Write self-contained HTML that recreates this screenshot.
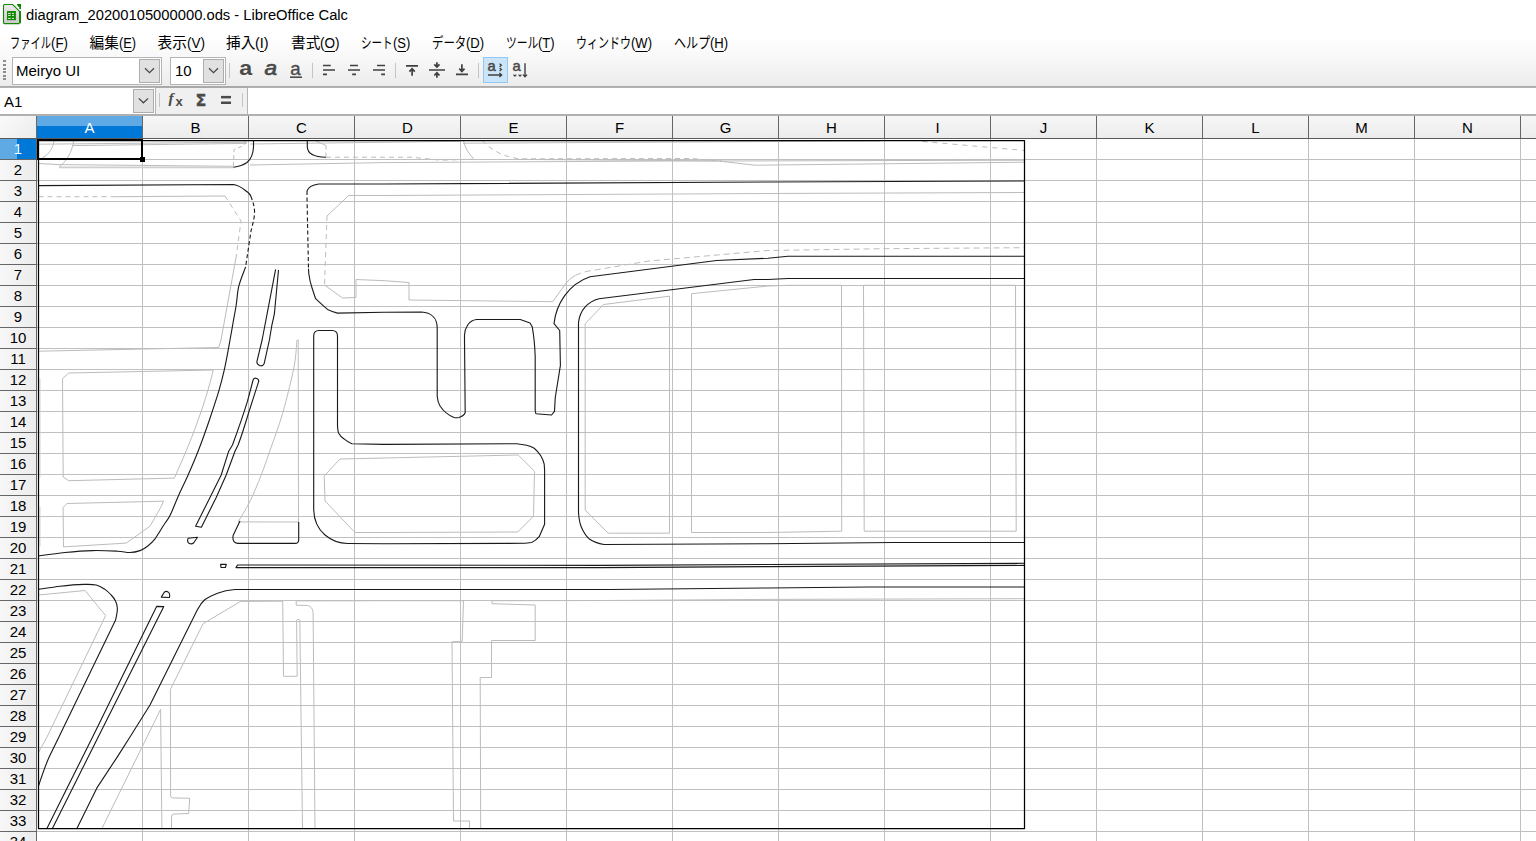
<!DOCTYPE html>
<html lang="ja"><head><meta charset="utf-8"><title>diagram_20200105000000.ods - LibreOffice Calc</title>
<style>
html,body{margin:0;padding:0;}
body{width:1536px;height:841px;overflow:hidden;background:#fff;position:relative;font-family:"Liberation Sans","Noto Sans CJK JP",sans-serif;color:#000;}
#title{position:absolute;left:0;top:0;width:1536px;height:29px;background:#fff;}
#title .txt{position:absolute;left:26px;top:6px;font-size:14.75px;line-height:18px;white-space:nowrap;}
#menu{position:absolute;left:0;top:29px;width:1536px;height:27px;}
#menu span{position:absolute;top:5px;font-size:14.7px;line-height:18px;white-space:nowrap;transform-origin:0 50%;}
#menu b.k{display:inline-block;font-weight:normal;transform-origin:0 50%;white-space:nowrap;vertical-align:top;}
#menu u{text-decoration:underline;text-underline-offset:2.5px;}
#tbbg{position:absolute;left:0;top:29px;width:1536px;height:57px;background:linear-gradient(#fff 0,#fff 12%,#f8f8f8 50%,#ececec 100%);}
#tb{position:absolute;left:0;top:56px;width:1536px;height:30px;}
#tbline{position:absolute;left:0;top:86px;width:1536px;height:2px;background:#a9a9a9;}
.combo{position:absolute;background:#fff;border:1px solid #b4b4b4;box-sizing:border-box;}
.combo .t{position:absolute;left:3px;top:4px;font-size:15px;line-height:18px;white-space:nowrap;}
.combo .btn{position:absolute;right:1px;top:1px;bottom:1px;width:21px;background:#e1e1e1;border:1px solid #adadad;box-sizing:border-box;}
#fb{position:absolute;left:0;top:88px;width:1536px;height:28px;background:#fff;}
#fbtools{position:absolute;left:156px;top:0;width:92px;height:27px;background:#f0f0f0;}
#fbline{position:absolute;left:0;top:114px;width:1536px;height:2px;background:#b0b0b0;}
#colhdr{position:absolute;left:0;top:116px;width:1536px;height:23px;background:linear-gradient(#f7f7f7,#ececec);border-bottom:1px solid #5a5a5a;box-sizing:border-box;}
#colhdr .corner{position:absolute;left:0;top:0;width:36px;height:22px;background:linear-gradient(135deg,#fafafa,#ececec);border-right:1px solid #666;}
.ch{position:absolute;top:0;height:22px;box-sizing:border-box;border-right:1px solid #666;text-align:center;font-size:15px;line-height:23px;color:#000;}
.ch.sel{background:linear-gradient(#5fa9e5 0,#5fa9e5 10px,#0078d7 10px,#0078d7 100%);color:#fff;}
#rowhdr{position:absolute;left:0;top:116px;width:37px;height:725px;}
.rh{position:absolute;left:0;width:37px;height:21px;box-sizing:border-box;background:linear-gradient(90deg,#f7f7f7,#ececec);border-bottom:1px solid #666;border-right:1px solid #666;text-align:center;font-size:15px;line-height:20px;}
.rh.sel{background:linear-gradient(90deg,#5fa9e5 0,#5fa9e5 17px,#0078d7 17px,#0078d7 100%);color:#fff;}
#sheet{position:absolute;left:0;top:0;}
svg text{font-family:"Liberation Sans",sans-serif;}
svg text.dj{font-family:"DejaVu Sans",sans-serif;}
svg text.ls{font-family:"Liberation Serif",serif;}

#wrapbtn{position:absolute;left:483px;top:1px;width:25px;height:26px;box-sizing:border-box;background:#cce4f7;border:1px solid #90c8f6;}
#fbinput{position:absolute;left:247px;top:-1px;width:1290px;height:28px;box-sizing:border-box;background:#fff;border:1px solid #b4b4b4;}

</style></head>
<body>
<div id="title">
<svg style="position:absolute;left:0;top:0" width="26" height="28" viewBox="0 0 26 28"><defs><linearGradient id="dg" x1="0" y1="0" x2="0" y2="1"><stop offset="0" stop-color="#efe9ef"/><stop offset="1" stop-color="#cfc8cf"/></linearGradient></defs><path d="M4 5H13L19.5 11.5V23.5H4Z" fill="url(#dg)"/><path d="M3.5 5L4.5 4.5H12.7L19.6 11.4M3.5 5V23L4.5 23.6H19.5" fill="none" stroke="#118a02" stroke-width="1.1"/><rect x="19" y="11" width="2" height="12.3" fill="#118a02"/><path d="M17 4H21V9H19.3V6.8H18V5.6H17Z" fill="#0e8200"/><rect x="7" y="11" width="8.9" height="9.2" fill="#118a02"/><path d="M8 13.4h2.8M12 13.4h2M8 15.4h2.8M12 15.4h2M8 18.4h2.8M12 18.4h2" stroke="#f4f4f4" stroke-width="0.9"/></svg>
<div class="txt">diagram_20200105000000.ods - LibreOffice Calc</div>
</div>
<div id="tbbg"></div>
<div id="menu">
<span style="left:10px"><b class="k" style="width:41.0px;transform:scaleX(0.697)">ファイル</b><b class="k" style="width:17.0px;transform:scaleX(0.904)">(<u>F</u>)</b></span>
<span style="left:89.5px"><b class="k" style="width:29.4px;transform:scaleX(1.000)">編集</b><b class="k" style="width:17.1px;transform:scaleX(0.871)">(<u>E</u>)</b></span>
<span style="left:157.5px"><b class="k" style="width:29.4px;transform:scaleX(1.000)">表示</b><b class="k" style="width:18.1px;transform:scaleX(0.922)">(<u>V</u>)</b></span>
<span style="left:226px"><b class="k" style="width:29.4px;transform:scaleX(1.000)">挿入</b><b class="k" style="width:13.6px;transform:scaleX(0.978)">(<u>I</u>)</b></span>
<span style="left:291px"><b class="k" style="width:29.4px;transform:scaleX(1.000)">書式</b><b class="k" style="width:19.6px;transform:scaleX(0.922)">(<u>O</u>)</b></span>
<span style="left:361px"><b class="k" style="width:31.6px;transform:scaleX(0.717)">シート</b><b class="k" style="width:17.4px;transform:scaleX(0.887)">(<u>S</u>)</b></span>
<span style="left:431.5px"><b class="k" style="width:34.3px;transform:scaleX(0.778)">データ</b><b class="k" style="width:18.2px;transform:scaleX(0.890)">(<u>D</u>)</b></span>
<span style="left:506px"><b class="k" style="width:32.3px;transform:scaleX(0.732)">ツール</b><b class="k" style="width:16.7px;transform:scaleX(0.888)">(<u>T</u>)</b></span>
<span style="left:576px"><b class="k" style="width:55.0px;transform:scaleX(0.748)">ウィンドウ</b><b class="k" style="width:21.0px;transform:scaleX(0.886)">(<u>W</u>)</b></span>
<span style="left:674px"><b class="k" style="width:36.3px;transform:scaleX(0.823)">ヘルプ</b><b class="k" style="width:18.2px;transform:scaleX(0.890)">(<u>H</u>)</b></span>
</div>
<div id="tb">
<div class="combo" style="left:12px;top:1px;width:150px;height:28px"><div class="t" style="left:3px">Meiryo UI</div><div class="btn"></div></div>
<div class="combo" style="left:170px;top:1px;width:56px;height:28px"><div class="t" style="left:4px">10</div><div class="btn"></div></div>
<div id="wrapbtn"></div>
</div>
<div id="tbline"></div>
<div id="fb">
<div class="combo" style="left:-1px;top:-1px;width:157px;height:28px"><div class="t" style="left:4px;top:5px">A1</div><div class="btn" style="right:1px;width:21px"></div></div>
<div id="fbtools"></div>
<div id="fbinput"></div>
</div>
<div id="fbline"></div>
<svg id="icons" width="1536" height="60" viewBox="0 56 1536 60" style="position:absolute;left:0;top:56px">
<g fill="#8c8c8c" shape-rendering="crispEdges"><rect x="3" y="60" width="3" height="2"/><rect x="3" y="64" width="3" height="2"/><rect x="3" y="68" width="3" height="2"/><rect x="3" y="71" width="3" height="2"/><rect x="3" y="75" width="3" height="2"/><rect x="3" y="78" width="3" height="2"/></g>
<g fill="none" stroke="#444" stroke-width="1.2"><path d="M145 68.3l4.5 4.4 4.5-4.4M209 68.3l4.5 4.4 4.5-4.4M138.8 98.4l4.6 4.4 4.7-4.4"/></g>
<g stroke="#c4c4c4" stroke-width="1" shape-rendering="crispEdges"><path d="M229.5 63v15M312.5 63v15M395.5 63v15M478.5 63v15M159.5 93v14M242.5 93v14"/></g>
<g fill="#4a4a4a">
<text x="239.3" y="75.2" font-size="19.4" font-weight="bold" transform="translate(239.3 0) scale(1.2 1) translate(-239.3 0)">a</text>
<text x="264.6" y="75.2" font-size="19.4" font-style="italic" stroke="#4a4a4a" stroke-width="0.7" transform="translate(265 0) scale(1.16 1) translate(-265 0)">a</text>
<text x="290.2" y="74.7" font-size="18.6" stroke="#4a4a4a" stroke-width="0.35">a</text>
<rect x="290" y="76.4" width="12" height="1.6"/>
<text x="487.6" y="70.9" font-size="14.8" stroke="#4a4a4a" stroke-width="0.5">a</text>
<text x="512.6" y="70.9" font-size="14.8" stroke="#4a4a4a" stroke-width="0.5">a</text>
</g>
<g fill="none" stroke="#404040" stroke-width="1.7">
<path d="M323 65.5h7.7M323 70h12M323 74.4h4"/>
<path d="M350 65.5h8M348 70h12M352.2 74.4h3.8"/>
<path d="M377 65.5h8M373 70h12M381.2 74.4h3.8"/>
<path d="M406 65.8h12M412.1 75.8v-7M409.4 71.6l2.7-2.9 2.7 2.9"/>
<path d="M429 70h16M436.9 62.2v4.6M434.3 64.3l2.6 2.8 2.6-2.8M436.9 77.8v-4.8M434.3 75.5l2.6-2.8 2.6 2.8"/>
<path d="M456 74.4h12M461.9 64.2v7M459.3 68.6l2.6 2.9 2.6-2.9"/>
<path d="M488 75h13.5M499.4 73l2.2 2-2.2 2" stroke-width="1.4"/>
<path d="M499.6 63.8l1.8 1.5-1.8 1.5M499.6 68l1.8 1.5-1.8 1.5" stroke-width="1.3"/>
<path d="M525 63.2v13M523 74.6l2 2.2 2-2.2" stroke-width="1.4"/>
<path d="M513.5 74.6l1.4 1.5 1.4-1.5M518.6 74.6l1.4 1.5 1.4-1.5" stroke-width="1.2"/>
</g>
<g fill="#4a4a4a">
<text x="168.6" y="103.4" font-size="15.5" font-style="italic" font-weight="bold" class="ls">f</text>
<text x="175.6" y="106.3" font-size="13" font-weight="bold">x</text>
<text x="195.6" y="105.9" font-size="16.2" font-weight="bold" class="dj" stroke="#4a4a4a" stroke-width="0.4" transform="translate(196 0) scale(0.98 1) translate(-196 0)">Σ</text>
<rect x="221" y="95.9" width="10" height="2.5"/><rect x="221" y="101.5" width="10" height="2.5"/>
</g>
</svg>
<div id="colhdr">
<div class="corner"></div>
<div class="ch sel" style="left:37px;width:106px">A</div>
<div class="ch" style="left:143px;width:106px">B</div>
<div class="ch" style="left:249px;width:106px">C</div>
<div class="ch" style="left:355px;width:106px">D</div>
<div class="ch" style="left:461px;width:106px">E</div>
<div class="ch" style="left:567px;width:106px">F</div>
<div class="ch" style="left:673px;width:106px">G</div>
<div class="ch" style="left:779px;width:106px">H</div>
<div class="ch" style="left:885px;width:106px">I</div>
<div class="ch" style="left:991px;width:106px">J</div>
<div class="ch" style="left:1097px;width:106px">K</div>
<div class="ch" style="left:1203px;width:106px">L</div>
<div class="ch" style="left:1309px;width:106px">M</div>
<div class="ch" style="left:1415px;width:106px">N</div>
<div class="ch" style="left:1521px;width:106px"></div>
</div>
<div id="rowhdr">
<div class="rh sel" style="top:23px">1</div>
<div class="rh" style="top:44px">2</div>
<div class="rh" style="top:65px">3</div>
<div class="rh" style="top:86px">4</div>
<div class="rh" style="top:107px">5</div>
<div class="rh" style="top:128px">6</div>
<div class="rh" style="top:149px">7</div>
<div class="rh" style="top:170px">8</div>
<div class="rh" style="top:191px">9</div>
<div class="rh" style="top:212px">10</div>
<div class="rh" style="top:233px">11</div>
<div class="rh" style="top:254px">12</div>
<div class="rh" style="top:275px">13</div>
<div class="rh" style="top:296px">14</div>
<div class="rh" style="top:317px">15</div>
<div class="rh" style="top:338px">16</div>
<div class="rh" style="top:359px">17</div>
<div class="rh" style="top:380px">18</div>
<div class="rh" style="top:401px">19</div>
<div class="rh" style="top:422px">20</div>
<div class="rh" style="top:443px">21</div>
<div class="rh" style="top:464px">22</div>
<div class="rh" style="top:485px">23</div>
<div class="rh" style="top:506px">24</div>
<div class="rh" style="top:527px">25</div>
<div class="rh" style="top:548px">26</div>
<div class="rh" style="top:569px">27</div>
<div class="rh" style="top:590px">28</div>
<div class="rh" style="top:611px">29</div>
<div class="rh" style="top:632px">30</div>
<div class="rh" style="top:653px">31</div>
<div class="rh" style="top:674px">32</div>
<div class="rh" style="top:695px">33</div>
<div class="rh" style="top:716px">34</div>
</div>
<svg id="sheet" width="1536" height="841" viewBox="0 0 1536 841">
<g stroke="#c0c0c0" stroke-width="1" shape-rendering="crispEdges">
<line x1="142.5" y1="139" x2="142.5" y2="841"/>
<line x1="248.5" y1="139" x2="248.5" y2="841"/>
<line x1="354.5" y1="139" x2="354.5" y2="841"/>
<line x1="460.5" y1="139" x2="460.5" y2="841"/>
<line x1="566.5" y1="139" x2="566.5" y2="841"/>
<line x1="672.5" y1="139" x2="672.5" y2="841"/>
<line x1="778.5" y1="139" x2="778.5" y2="841"/>
<line x1="884.5" y1="139" x2="884.5" y2="841"/>
<line x1="990.5" y1="139" x2="990.5" y2="841"/>
<line x1="1096.5" y1="139" x2="1096.5" y2="841"/>
<line x1="1202.5" y1="139" x2="1202.5" y2="841"/>
<line x1="1308.5" y1="139" x2="1308.5" y2="841"/>
<line x1="1414.5" y1="139" x2="1414.5" y2="841"/>
<line x1="1520.5" y1="139" x2="1520.5" y2="841"/>
<line x1="37" y1="159.5" x2="1536" y2="159.5"/>
<line x1="37" y1="180.5" x2="1536" y2="180.5"/>
<line x1="37" y1="201.5" x2="1536" y2="201.5"/>
<line x1="37" y1="222.5" x2="1536" y2="222.5"/>
<line x1="37" y1="243.5" x2="1536" y2="243.5"/>
<line x1="37" y1="264.5" x2="1536" y2="264.5"/>
<line x1="37" y1="285.5" x2="1536" y2="285.5"/>
<line x1="37" y1="306.5" x2="1536" y2="306.5"/>
<line x1="37" y1="327.5" x2="1536" y2="327.5"/>
<line x1="37" y1="348.5" x2="1536" y2="348.5"/>
<line x1="37" y1="369.5" x2="1536" y2="369.5"/>
<line x1="37" y1="390.5" x2="1536" y2="390.5"/>
<line x1="37" y1="411.5" x2="1536" y2="411.5"/>
<line x1="37" y1="432.5" x2="1536" y2="432.5"/>
<line x1="37" y1="453.5" x2="1536" y2="453.5"/>
<line x1="37" y1="474.5" x2="1536" y2="474.5"/>
<line x1="37" y1="495.5" x2="1536" y2="495.5"/>
<line x1="37" y1="516.5" x2="1536" y2="516.5"/>
<line x1="37" y1="537.5" x2="1536" y2="537.5"/>
<line x1="37" y1="558.5" x2="1536" y2="558.5"/>
<line x1="37" y1="579.5" x2="1536" y2="579.5"/>
<line x1="37" y1="600.5" x2="1536" y2="600.5"/>
<line x1="37" y1="621.5" x2="1536" y2="621.5"/>
<line x1="37" y1="642.5" x2="1536" y2="642.5"/>
<line x1="37" y1="663.5" x2="1536" y2="663.5"/>
<line x1="37" y1="684.5" x2="1536" y2="684.5"/>
<line x1="37" y1="705.5" x2="1536" y2="705.5"/>
<line x1="37" y1="726.5" x2="1536" y2="726.5"/>
<line x1="37" y1="747.5" x2="1536" y2="747.5"/>
<line x1="37" y1="768.5" x2="1536" y2="768.5"/>
<line x1="37" y1="789.5" x2="1536" y2="789.5"/>
<line x1="37" y1="810.5" x2="1536" y2="810.5"/>
<line x1="37" y1="831.5" x2="1536" y2="831.5"/>
</g>
<g id="gray" fill="none" stroke="#bcbcbc" stroke-width="1" stroke-linejoin="round">
<path d="M54 140.5C53 149 48 156 39 159.5M73.7 140.5C72 152 67 161 59 167"/>
<path d="M38.5 144.2L247 142.2M73 145.6L247 143.4M250 144L460 141.3M463 143.2L880 141"/>
<path d="M38.5 163.5L59 164.6L233 166.3"/>
<path d="M59 167.4L233.5 167.4" stroke="#cfcfcf" stroke-width="1.6"/>
<path d="M250 165L384 162.6L670 161L722 161L1024.5 160.2"/>
<path d="M245 141L244 145.5L234 149.5L233.4 167" stroke-dasharray="4 3"/>
<path d="M316 141L326 145.5"/>
<path d="M326 145.5V157" stroke-dasharray="4 3"/>
<path d="M326 157.2H411L441 160.2L473.5 159.2" stroke-dasharray="5 4"/>
<path d="M463.5 140.5C465 148 469 154 473.5 158.5"/>
<path d="M482.2 140.5C489 148 499 154.5 511 157.2L518.5 158.8L692.5 158.5L722.5 161.5" stroke-dasharray="5 4"/>
<path d="M518.5 159.4L722 160.9M722.5 161.5L755 165.2L910 163.5L1024.5 162.2"/>
<path d="M922.5 141.5L1024.5 150.5" stroke-dasharray="5 5"/>
<path d="M38.5 196.7H115" stroke-dasharray="5 4"/>
<path d="M115 196.7L225 196"/>
<path d="M225 196L241 221L236.3 256" stroke-dasharray="5 4"/>
<path d="M236.3 256L221 340L218.7 347.5L38.5 351.2"/>
<path d="M1024.5 192.5L768 193.5L384 195.5L348.7 195.5L327 216"/>
<path d="M327 216L324.5 285" stroke-dasharray="5 4"/>
<path d="M324.5 285L342.5 298L356 297.5V279.5L384 280.7L409 282.5V300L552.7 301.7L566.5 282.5Q570.5 278 575.5 275.3"/>
<path d="M575.5 275.3Q581.5 272.3 589 271L649 261L768 250.5L883 248.7L1024.5 247.7" stroke-dasharray="6 4"/>
<path d="M669.5 296.2L603.5 304.5L585.2 323.7V510L608.2 533.2H669.5Z"/>
<path d="M691.5 293.7L768 286L790 285.3L841.5 285.3L841.7 531.2L768 532.5L691.5 532.5Z"/>
<path d="M863.5 285.3H1015.5L1016.2 531.2H864.2Z"/>
<path d="M68.7 373L213.3 370C209 388 204 404 198.1 420C194 432 189.5 443 185 453.7L174.4 478.1L68.7 480.7L63.2 477L62.5 378.7Z"/>
<path d="M66.9 503.5L163.7 501.2L160 508.7L150 526.2L126.2 543.1L63.5 546.9L63.1 507.5Z"/>
<path d="M40 378.7V477.5M40 507V546" stroke="#d4d4d4"/>
<path d="M238.1 521.9C240.1 518.5 246.1 509.1 250.0 501.2C253.9 493.4 258.1 482.9 261.2 475.0C264.4 467.1 265.5 462.9 268.8 453.8C272.0 444.6 277.5 429.8 280.6 420.0C283.7 410.2 285.2 404.2 287.5 395.0C289.8 385.8 292.8 374.1 294.4 365.0C296.0 355.9 296.5 344.6 296.9 340.5L298.2 339.8L298.5 522L238.1 521.9"/>
<path d="M340 459L384 458L518.2 455L534.5 471.2L533.5 516.2L517.7 532L384 532.5L355 532.5L325 501L324.2 476Z"/>
<path d="M38.5 595L85 590.5L105.6 615.6L47.5 736L38.5 752.5"/>
<path d="M282.7 601.2L240.6 601.4L203.1 623.7L170.4 689.4L170.6 796Q170.8 797.8 172.5 797.9L189.7 798.3L188.7 813.5L173.7 814.1Q171.6 814.5 171.5 816V828.5"/>
<path d="M101.9 828.5L160.6 709.4L161.9 828.5"/>
<path d="M282.7 601.2L283.5 676.3H297.2L296.6 620.5Q296.8 619.4 298 619.4Q299.7 619.4 299.8 620.5L302.5 828.5"/>
<path d="M296.2 601V605.2L307.5 605.5Q312.5 606.5 313.1 612.5L315 828.5"/>
<path d="M296.2 600.9L384 600.7H463.5L462.2 641.7H452L453.5 821H469.5V828.5"/>
<path d="M492 600.7V603.7L535.2 605V640.5H491.5V677.5H480.2L480.7 828.5"/>
<path d="M492 600.7L604 600.5L768 599.4L1024.5 598.7"/>
</g>
<g id="black" fill="none" stroke="#1a1a1a" stroke-width="1.12" stroke-linejoin="round" stroke-linecap="butt">
<path d="M253.5 140.5V147C253.2 154 250.5 159.5 247 162.5C243.5 165 239 166.5 233.4 167.2"/>
<path d="M307.3 140.5V147C307.6 154 314 157 326 157.2"/>
<path d="M38.5 185.6L233.7 184.5C240 185.5 244 189.5 247.5 192Q250 194 250.7 196"/>
<path d="M250.7 196C253.5 203 254.8 208 254.5 214C254 221 252 226 251 231L245.6 266.9" stroke-dasharray="4 2.6"/>
<path d="M245.6 266.9C244.5 270.1 240.3 279.9 238.8 286.2C237.2 292.6 237.2 299.0 236.2 305.0C235.3 311.0 234.1 316.7 233.1 322.5C232.1 328.3 231.4 332.2 230.0 340.0C228.6 347.8 226.3 360.9 224.4 369.4C222.5 377.9 221.2 382.8 218.8 391.2C216.2 399.7 212.8 410.0 209.4 420.0C206.0 430.0 201.7 442.1 198.1 451.2C194.5 460.4 191.3 467.7 188.1 475.0C184.9 482.3 181.8 488.2 178.8 495.0C175.7 501.8 172.5 510.6 170.0 515.6C167.5 520.6 166.2 521.1 163.8 525.0C161.2 528.9 157.7 535.2 155.0 538.8C152.3 542.3 150.0 544.3 147.5 546.2C145.0 548.2 142.9 549.6 140.0 550.6C137.1 551.6 133.8 552.4 130.0 552.5C126.2 552.6 123.8 551.6 117.5 551.2C111.2 550.9 101.2 550.4 92.5 550.6C83.8 550.8 74.0 551.6 65.0 552.5C56.0 553.4 42.9 555.3 38.5 555.9"/>
<path d="M1024.5 181L768 182L384 184L318.7 184C312 185 308 188 307 191"/>
<path d="M307 191L307 197.5L308.5 268.7" stroke-dasharray="4 2.6"/>
<path d="M308.5 268.7L308.8 273.7C309.5 279 310.6 283.5 311.9 287.5L315.6 298.7Q321 304 327.5 309.4Q332 311.5 337.5 313.1L384 312.3L421.5 312C431 312.5 437 318 437.2 327.5V396.2C437.5 400 438.5 403.5 440.2 406.2C443.5 411 449 415.5 454 417.5Q456.5 418 459 417.5C462 416.5 464.5 414.5 465.2 412.5L464.5 340V335C464.7 331 466 327.5 467.7 325C470 321.5 473 320 476.5 319.5H520.3L530 323L532.2 326.7Q534.6 340 535.2 356.5V410.7L535.9 413.7L551.5 415L554.5 411.4L555.2 398L560.4 365.4L559.7 330.5L554 323.7C556 305 568 284 590 276.7L716.5 260.5L768 258.2L788 256.2H1024.5"/>
<path d="M1024.5 278.5H788L768 279.5L754 279.5L599 298.7C588 301.5 580 310 578.5 322.5V512.5C579 520 580 524 581.5 527.5C583.5 532 586 536 589 538.7C593 541.5 598 543.5 604 544.5L768 543.7L893 542.5H1024.5"/>
<path d="M313.7 336C313.7 332.5 316 330.5 319 330.5H332C335.5 330.5 337.5 332.5 337.5 336V426Q337.7 430 338.5 433Q340.5 436.5 343.7 438.7Q347.5 442 351.9 443.7L384 444.4L516.7 443.7Q522 444.2 526.7 445.3Q531 446.5 534.2 448.3Q538 451.5 540.8 455.8Q543 459.5 544.2 464.2L544.6 470V524.2L539.2 536.7Q536 540.5 531.7 542.5L525 543.3L384 543.7L347.5 543.5C340 543.5 331 540 325 535C318 529 314 520 313.7 510Z"/>
<path d="M275.6 269.4L262.1 340L256.9 361.6Q256.6 364 259.5 365.6Q262.6 366.8 264.2 363.4L269.4 340L271.9 325Q273.4 319 274.4 313.7L278.5 270"/>
<path d="M253.1 380Q253.8 378 255.9 378.2Q259 379 258.7 381.3L248.7 412.5C245 425 241.5 436 238.1 445L235 451.2L226.2 475L216.2 497.5L201.4 527.2L195.6 526.2L210 497.5L221.2 475L228.7 451.2L232.5 445C238 430 243 416 247.5 401.2Z"/>
<path d="M188.2 538.2L197.5 537.3L193.6 543Q191.5 544.6 189 543.3Q186.6 541.2 188.2 538.2Z"/>
<path d="M298.7 522V540Q298.5 543.4 295 543.4H237.5Q232 542.5 233.1 535.6L240 521"/>
<path d="M220.6 564.4H226.3L225.4 567.5H221Z"/>
<path d="M1024.5 563.3L768 564.5L600 565.4L237.5 565L236 567.6L600 567.6L768 566.6L1024.5 565.4"/>
<path d="M161.3 597.1L164.3 592.2Q166 590.8 168 591.9Q170.3 593.6 169.5 597.5Z"/>
<path d="M38.5 589.4C42.1 588.9 52.5 587.1 60.0 586.2C67.5 585.4 77.7 584.6 83.8 584.4C89.8 584.2 92.7 584.2 96.2 585.0C99.8 585.8 102.5 587.7 105.0 589.4C107.5 591.1 109.5 593.1 111.2 595.0C113.0 596.9 114.5 599.0 115.5 601.0C116.5 603.0 117.0 605.3 117.2 607.0C117.5 608.7 117.5 609.1 117.2 611.2C117.0 613.4 115.9 618.5 115.6 620.0L59.4 736L49.4 756.6C45 766 41.5 777 38.5 786"/>
<path d="M46.9 828.5L93.1 736L156.6 606.4L163.8 606.6L98.7 736L52.4 828.5"/>
<path d="M1024.5 587H868L768 588L609 589.5L384 589.5L235 589.5C228 590 222 591.5 217.5 593.3C212 595.5 208 597.5 205 599.5C201.5 602.5 199.5 605.5 197.5 609.5L150 705L130.6 736L117.5 756.6L96.9 787.9L76.9 828.5"/>
<rect x="38.5" y="140.5" width="986" height="688" stroke="#000" stroke-width="1.25"/>
</g>
<rect x="38" y="140" width="104" height="19" fill="none" stroke="#000" stroke-width="2" shape-rendering="crispEdges"/>
<rect x="140" y="157" width="5" height="5" fill="#000" shape-rendering="crispEdges"/>
</svg>
</body></html>
